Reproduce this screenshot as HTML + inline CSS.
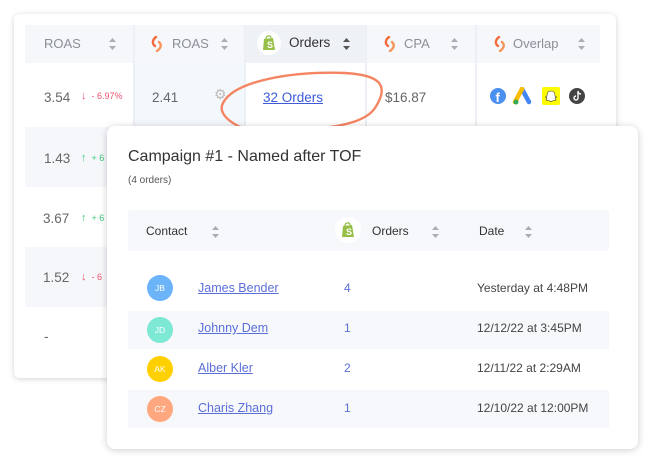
<!DOCTYPE html>
<html><head><style>
*{margin:0;padding:0;box-sizing:border-box}
body{width:645px;height:456px;background:#fff;font-family:"Liberation Sans",sans-serif;position:relative;overflow:hidden;color:#555}
.abs{position:absolute}
.card{left:14px;top:14px;width:602px;height:364px;background:#fff;border-radius:6px;box-shadow:0 1px 6px rgba(0,0,0,.18)}
.hdr{left:25px;top:25px;width:575px;height:38px;background:#f5f7fa}
.div{width:2px;background:#eceff3}
.ht{font-size:13px;color:#8a8f98}
.sort{width:7px;height:12px}
.t{font-size:13.5px;color:#666}
.pop{left:107px;top:126px;width:531px;height:323px;background:#fff;border-radius:8px;box-shadow:0 1px 8px rgba(0,0,0,.2)}
.av{width:26px;height:26px;border-radius:50%;color:#fff;font-size:8.5px;text-align:center;line-height:26px}
.nm{font-size:12.5px;color:#5b6fd8;text-decoration:underline}
.num{font-size:12px;color:#5b6fd8}
.dt{font-size:12px;color:#444}
.ar{font-size:11px}
</style></head><body>
<svg width="0" height="0" style="position:absolute"><defs>
<symbol id="s" viewBox="0 0 7 12"><path d="M3.5 0L7 4H0z M3.5 12L7 8H0z" fill="#a9adb5"/></symbol>
<symbol id="l" viewBox="0 0 12 16"><path d="M5 1C1 4 1 8 4 10" stroke="#f46a3d" stroke-width="2.4" fill="none" stroke-linecap="round"/><path d="M8 6c3 3 2 6-2 9" stroke="#f7955a" stroke-width="2.4" fill="none" stroke-linecap="round"/></symbol>
<symbol id="sh" viewBox="0 0 14 16"><path d="M2 4L11 3 13 15 1 15z" fill="#95bf47"/><path d="M4 4C4 0 9 0 9 3" stroke="#95bf47" fill="none" stroke-width="1.3"/><text x="5" y="13" font-size="9" font-weight="bold" fill="#fff" font-family="Liberation Sans">S</text></symbol>
</defs></svg>

<div class="abs card"></div>
<div class="abs hdr"></div>
<div class="abs" style="left:134px;top:63px;width:111px;height:64px;background:#f3f8fc"></div>
<div class="abs" style="left:246px;top:25px;width:120px;height:38px;background:#eef1f6"></div>
<div class="abs" style="left:25px;top:127px;width:110px;height:60px;background:#f5f7fa"></div>
<div class="abs" style="left:25px;top:247px;width:110px;height:60px;background:#f5f7fa"></div>
<div class="abs div" style="left:133px;top:25px;height:102px"></div>
<div class="abs div" style="left:244px;top:25px;height:102px"></div>
<div class="abs div" style="left:365px;top:25px;height:102px"></div>
<div class="abs div" style="left:475px;top:25px;height:102px"></div>

<div class="abs ht" style="left:44px;top:36px">ROAS</div>
<svg class="abs sort" style="left:109px;top:38px"><use href="#s"/></svg>
<svg class="abs" style="left:151px;top:36px" width="12" height="16"><use href="#l"/></svg>
<div class="abs ht" style="left:172px;top:36px">ROAS</div>
<svg class="abs sort" style="left:221px;top:38px"><use href="#s"/></svg>
<div class="abs" style="left:257px;top:31px;width:24px;height:24px;border-radius:50%;background:#fff"></div>
<svg class="abs" style="left:262px;top:35px" width="14" height="16"><use href="#sh"/></svg>
<div class="abs" style="left:289px;top:35px;font-size:13.5px;color:#333">Orders</div>
<svg class="abs sort" style="left:343px;top:38px"><path d="M3.5 0L7 4H0z M3.5 12L7 8H0z" fill="#555"/></svg>
<svg class="abs" style="left:384px;top:36px" width="12" height="16"><use href="#l"/></svg>
<div class="abs ht" style="left:404px;top:36px">CPA</div>
<svg class="abs sort" style="left:451px;top:38px"><use href="#s"/></svg>
<svg class="abs" style="left:494px;top:36px" width="12" height="16"><use href="#l"/></svg>
<div class="abs ht" style="left:513px;top:36px">Overlap</div>
<svg class="abs sort" style="left:578px;top:38px"><use href="#s"/></svg>

<div class="abs t" style="left:44px;top:90px">3.54</div>
<div class="abs" style="left:81px;top:90px;font-size:9px;color:#f0506e"><span class="ar">↓</span> &nbsp;- 6.97%</div>
<div class="abs t" style="left:152px;top:90px">2.41</div>
<div class="abs" style="left:214px;top:86px;font-size:14px;color:#bbb">⚙</div>
<div class="abs" style="left:263px;top:90px;font-size:13.5px;color:#3d5bd9;text-decoration:underline">32 Orders</div>
<div class="abs t" style="left:385px;top:90px">$16.87</div>
<svg class="abs" style="left:489px;top:87px" width="100" height="18">
<circle cx="9" cy="9" r="8" fill="#4a90f0"/><text x="6.5" y="15" font-size="13" font-weight="bold" fill="#fff" font-family="Liberation Sans">f</text>
<path d="M33 2L40 15" stroke="#4285f4" stroke-width="4.5" stroke-linecap="round"/><path d="M33 2L26 15" stroke="#fbbc04" stroke-width="4.5" stroke-linecap="round"/><circle cx="27" cy="15" r="2.5" fill="#34a853"/>
<rect x="53" y="0" width="18" height="18" rx="2" fill="#fffc00"/><path d="M62 4c3 0 4 2 4 5l1.5 1-1.5 1 1 2-2.5.5-2.5 1-2.5-1-2.5-.5 1-2-1.5-1 1.5-1c0-3 1-5 4-5z" fill="#fff" stroke="#333" stroke-width=".6"/>
<circle cx="88" cy="9" r="8" fill="#444"/><path d="M89 4v7a2 2 0 1 1-2-2M89 4c0 2 1.5 3 3 3" stroke="#fff" stroke-width="1.4" fill="none"/>
</svg>

<svg class="abs" style="left:215px;top:68px" width="170" height="72"><path d="M78 70C30 68 0 50 8 35 20 12 80 3 130 5c35 2 45 12 30 35-8 12-30 18-55 20" fill="none" stroke="#f58462" stroke-width="2.4" stroke-linecap="round"/></svg>

<div class="abs t" style="left:44px;top:151px">1.43</div>
<div class="abs" style="left:81px;top:152px;font-size:9px;color:#3cc87a"><span class="ar">↑</span> &nbsp;+ 6</div>
<div class="abs t" style="left:43px;top:211px">3.67</div>
<div class="abs" style="left:81px;top:212px;font-size:9px;color:#3cc87a"><span class="ar">↑</span> &nbsp;+ 6</div>
<div class="abs t" style="left:43px;top:270px">1.52</div>
<div class="abs" style="left:81px;top:271px;font-size:9px;color:#f0506e"><span class="ar">↓</span> &nbsp;- 6</div>
<div class="abs t" style="left:44px;top:329px">-</div>

<div class="abs pop"></div>
<div class="abs" style="left:128px;top:148px;font-size:16px;color:#333">Campaign #1 - Named after TOF</div>
<div class="abs" style="left:128px;top:175px;font-size:10px;color:#555">(4 orders)</div>
<div class="abs" style="left:128px;top:210px;width:481px;height:41px;background:#f6f8fc;border-radius:3px"></div>
<div class="abs" style="left:146px;top:224px;font-size:12px;color:#333">Contact</div>
<svg class="abs sort" style="left:212px;top:226px"><use href="#s"/></svg>
<div class="abs" style="left:335px;top:217px;width:26px;height:26px;border-radius:50%;background:#fff"></div>
<svg class="abs" style="left:341px;top:222px" width="14" height="16"><use href="#sh"/></svg>
<div class="abs" style="left:372px;top:224px;font-size:12px;color:#333">Orders</div>
<svg class="abs sort" style="left:432px;top:226px"><use href="#s"/></svg>
<div class="abs" style="left:479px;top:224px;font-size:12px;color:#333">Date</div>
<svg class="abs sort" style="left:525px;top:226px"><use href="#s"/></svg>

<div class="abs" style="left:128px;top:311px;width:481px;height:38px;background:#f6f8fc"></div>
<div class="abs" style="left:128px;top:390px;width:481px;height:38px;background:#f6f8fc"></div>

<div class="abs av" style="left:147px;top:275px;background:#6cb4f8">JB</div>
<div class="abs nm" style="left:198px;top:281px">James Bender</div>
<div class="abs num" style="left:344px;top:281px">4</div>
<div class="abs dt" style="left:477px;top:281px">Yesterday at 4:48PM</div>

<div class="abs av" style="left:147px;top:317px;background:#7de8d3">JD</div>
<div class="abs nm" style="left:198px;top:321px">Johnny Dem</div>
<div class="abs num" style="left:344px;top:321px">1</div>
<div class="abs dt" style="left:477px;top:321px">12/12/22 at 3:45PM</div>

<div class="abs av" style="left:147px;top:356px;background:#ffd000">AK</div>
<div class="abs nm" style="left:198px;top:361px">Alber Kler</div>
<div class="abs num" style="left:344px;top:361px">2</div>
<div class="abs dt" style="left:477px;top:361px">12/11/22 at 2:29AM</div>

<div class="abs av" style="left:147px;top:396px;background:#ffa77e">CZ</div>
<div class="abs nm" style="left:198px;top:401px">Charis Zhang</div>
<div class="abs num" style="left:344px;top:401px">1</div>
<div class="abs dt" style="left:477px;top:401px">12/10/22 at 12:00PM</div>
</body></html>
